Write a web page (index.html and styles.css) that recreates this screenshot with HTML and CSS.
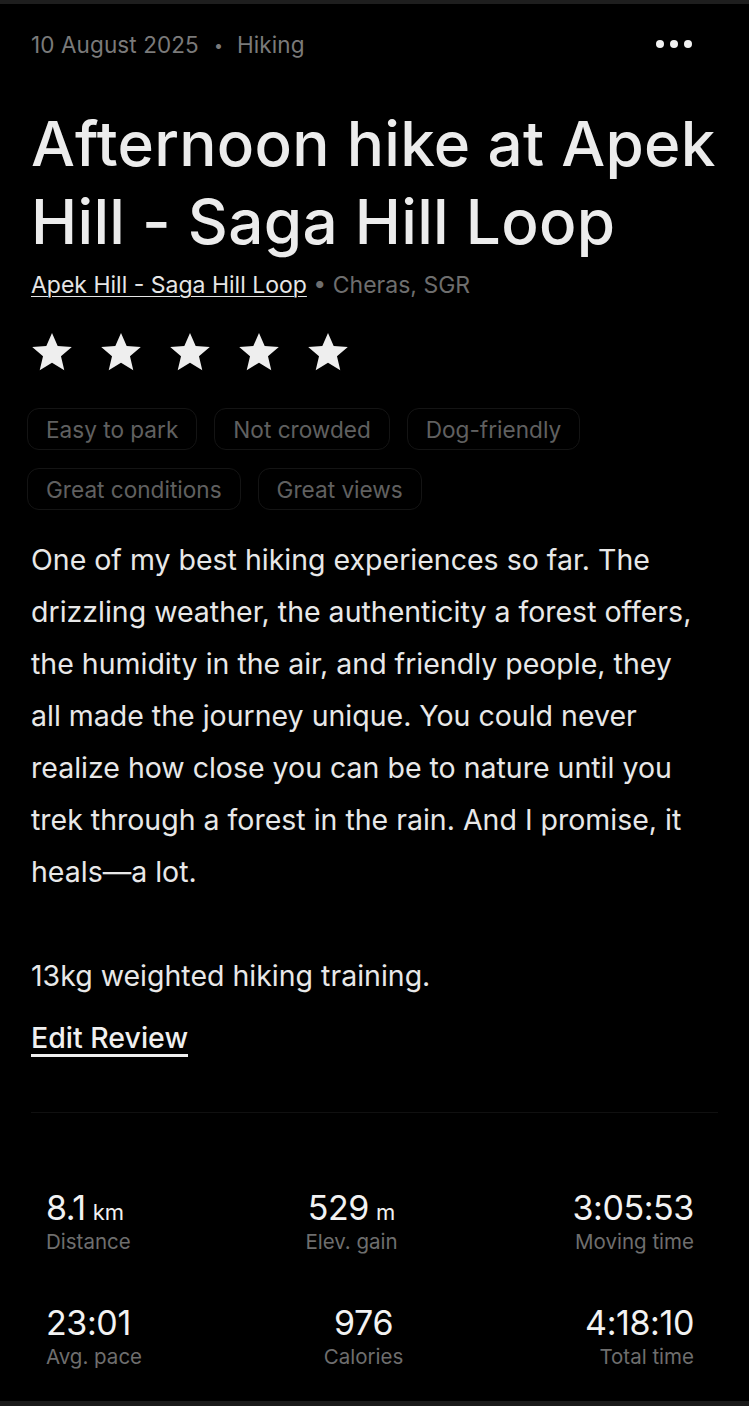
FILE: index.html
```html
<!DOCTYPE html>
<html lang="en">
<head>
<meta charset="utf-8">
<title>Afternoon hike at Apek Hill - Saga Hill Loop</title>
<link rel="stylesheet" href="styles.css">
</head>
<body>
<div class="screen">
  <main class="content">
    <header class="topbar">
      <span class="meta">10 August 2025<span class="sep">•</span>Hiking</span>
      <button class="more" aria-label="More options">
        <span class="dot"></span><span class="dot"></span><span class="dot"></span>
      </button>
    </header>

    <h1 class="title">Afternoon hike at Apek Hill - Saga Hill Loop</h1>

    <p class="location"><a class="trail" href="#">Apek Hill - Saga Hill Loop</a><span class="place"> • Cheras, SGR</span></p>

    <div class="stars" aria-label="5 out of 5 stars">
      <svg class="star" viewBox="0 0 24 24"><path d="M12 1.6l3.1 7.1 7.7.6-5.9 5 1.8 7.6L12 17.8l-6.7 4.1 1.8-7.6-5.9-5 7.7-.6z"/></svg>
      <svg class="star" viewBox="0 0 24 24"><path d="M12 1.6l3.1 7.1 7.7.6-5.9 5 1.8 7.6L12 17.8l-6.7 4.1 1.8-7.6-5.9-5 7.7-.6z"/></svg>
      <svg class="star" viewBox="0 0 24 24"><path d="M12 1.6l3.1 7.1 7.7.6-5.9 5 1.8 7.6L12 17.8l-6.7 4.1 1.8-7.6-5.9-5 7.7-.6z"/></svg>
      <svg class="star" viewBox="0 0 24 24"><path d="M12 1.6l3.1 7.1 7.7.6-5.9 5 1.8 7.6L12 17.8l-6.7 4.1 1.8-7.6-5.9-5 7.7-.6z"/></svg>
      <svg class="star" viewBox="0 0 24 24"><path d="M12 1.6l3.1 7.1 7.7.6-5.9 5 1.8 7.6L12 17.8l-6.7 4.1 1.8-7.6-5.9-5 7.7-.6z"/></svg>
    </div>

    <ul class="tags">
      <li class="tag">Easy to park</li>
      <li class="tag">Not crowded</li>
      <li class="tag">Dog-friendly</li>
      <li class="tag">Great conditions</li>
      <li class="tag">Great views</li>
    </ul>

    <div class="review">
      <p>One of my best hiking experiences so far. The drizzling weather, the authenticity a forest offers, the humidity in the air, and friendly people, they all made the journey unique. You could never realize how close you can be to nature until you trek through a forest in the rain. And I promise, it heals—a lot.</p>
      <p>13kg weighted hiking training.</p>
    </div>

    <a class="edit" href="#">Edit Review</a>

    <hr class="divider">

    <section class="stats">
      <div class="stat-row">
        <div class="stat start"><div class="value">8.1<span class="unit">km</span></div><div class="label">Distance</div></div>
        <div class="stat mid"><div class="value">529<span class="unit">m</span></div><div class="label">Elev. gain</div></div>
        <div class="stat end"><div class="value">3:05:53</div><div class="label">Moving time</div></div>
      </div>
      <div class="stat-row">
        <div class="stat start"><div class="value">23:01</div><div class="label">Avg. pace</div></div>
        <div class="stat mid"><div class="value">976</div><div class="label">Calories</div></div>
        <div class="stat end"><div class="value">4:18:10</div><div class="label">Total time</div></div>
      </div>
    </section>
  </main>
</div>
</body>
</html>
```

FILE: styles.css
```css
* { box-sizing: border-box; }

html, body {
  margin: 0;
  padding: 0;
  background: #000;
}

body {
  font-family: Inter, "Liberation Sans", Arial, sans-serif;
  color: #ececec;
}

.screen {
  min-height: 1406px;
  border-top: 4px solid #1e1e1e;
  border-bottom: 5px solid #1a1a1a;
  background: #000;
  display: flex;
  flex-direction: column;
}

.content {
  flex: 1;
  padding: 0 31px;
  display: flex;
  flex-direction: column;
}

.topbar {
  display: flex;
  align-items: center;
  justify-content: space-between;
  height: 30px;
  margin-top: 25px;
}

.meta {
  font-size: 22.5px;
  color: #7a7a7a;
  letter-spacing: 0.1px;
}

.sep {
  margin: 0 14px 0 15px;
  font-size: 16px;
  position: relative;
  top: -2px;
}

.more {
  display: flex;
  gap: 6px;
  background: none;
  border: 0;
  padding: 0;
  margin-right: 26px;
  cursor: pointer;
}

.dot {
  width: 8px;
  height: 8px;
  border-radius: 50%;
  background: #f2f2f2;
}

.title {
  margin: 46px 0 0 0;
  font-size: 62px;
  line-height: 78px;
  font-weight: 500;
  letter-spacing: 0.3px;
  color: #ececec;
}

.location {
  margin: 9px 0 0 0;
  font-size: 23px;
  line-height: 30px;
}

.trail {
  color: #e6e6e6;
  text-decoration: underline;
  text-underline-offset: 3px;
  text-decoration-thickness: 1px;
}

.place {
  color: #6e6e6e;
}

.stars {
  display: flex;
  gap: 25px;
  margin-top: 30px;
  margin-left: -1px;
}

.star {
  width: 44px;
  height: 44px;
  fill: #eeeeee;
}

.tags {
  list-style: none;
  margin: 34px 0 0 -4px;
  padding: 0;
  display: flex;
  flex-wrap: wrap;
  gap: 18px 17px;
  max-width: 640px;
}

.tag {
  height: 42px;
  padding: 0 18px;
  display: flex;
  align-items: center;
  font-size: 22.6px;
  color: #606060;
  border: 1.5px solid #141414;
  border-radius: 12px;
}

.review {
  margin: 24px 18px 0 0;
  font-size: 28.5px;
  line-height: 52px;
  color: #e8e8e8;
}

.review p {
  margin: 0 0 52px 0;
}

.review p:last-child {
  margin-bottom: 0;
}

.edit {
  align-self: flex-start;
  margin-top: 16px;
  font-size: 28.5px;
  line-height: 40px;
  font-weight: 500;
  color: #f0f0f0;
  text-decoration: underline;
  text-decoration-thickness: 3px;
  text-underline-offset: 6px;
}

.divider {
  margin: 54px 0 0 0;
  border: 0;
  border-top: 1px solid #101010;
}

.stats {
  padding: 75px 24px 0 15px;
  display: flex;
  flex-direction: column;
  gap: 48px;
}

.stat-row {
  display: flex;
  justify-content: space-between;
}

.stat {
  display: flex;
  flex-direction: column;
}

.stat.start { align-items: flex-start; }
.stat.mid { align-items: center; }
.stat.end { align-items: flex-end; }

.value {
  font-size: 34px;
  line-height: 40px;
  color: #f2f2f2;
  letter-spacing: -0.4px;
}

.unit {
  font-size: 22px;
  line-height: 1;
  margin-left: 7px;
  letter-spacing: 0;
}

.label {
  margin-top: 1px;
  font-size: 20.5px;
  line-height: 26px;
  color: #6e6e6e;
}
```
